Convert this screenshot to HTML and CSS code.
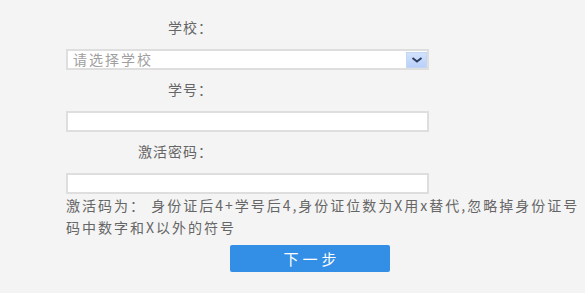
FILE: index.html
```html
<!DOCTYPE html>
<html lang="zh-CN">
<head>
<meta charset="utf-8">
<title>激活</title>
<link rel="stylesheet" href="styles.css">
</head>
<body>
<form class="form">
  <div class="group">
    <div class="label">学校：</div>
    <div class="select">
      <span class="placeholder">请选择学校</span>
      <span class="arrow"><svg width="12" height="8" viewBox="0 0 12 8"><path d="M1.5 2 L6 5.5 L10.5 2" fill="none" stroke="#2f3e5c" stroke-width="2"/></svg></span>
    </div>
  </div>
  <div class="group">
    <div class="label">学号：</div>
    <input class="input" type="text">
  </div>
  <div class="group">
    <div class="label">激活密码：</div>
    <input class="input" type="text">
  </div>
  <p class="hint">激活码为：&nbsp;身份证后4+学号后4,身份证位数为X用x替代,忽略掉身份证号码中数字和X以外的符号</p>
  <div class="actions"><button class="btn" type="button">下一步</button></div>
</form>
</body>
</html>
```

FILE: styles.css
```css
html, body {
  margin: 0;
  padding: 0;
  background: #f4f4f4;
  width: 585px;
  height: 293px;
  overflow: hidden;
}
body {
  font-family: "Noto Sans CJK SC", "Noto Sans", sans-serif;
  color: #666;
}
.form {
  padding: 17px 0 0 66px;
  display: flex;
  flex-direction: column;
}
.group {
  display: flex;
  flex-direction: column;
}
.group + .group { margin-top: 9px; }
.label {
  width: 147px;
  height: 20px;
  line-height: 20px;
  text-align: right;
  font-size: 14px;
  letter-spacing: 1px;
  color: #666;
  margin-bottom: 12px;
}
.select, .input {
  box-sizing: border-box;
  width: 363px;
  height: 21px;
  border: 2px solid #dedede;
  background: #fff;
  margin: 0;
  padding: 0;
}
.select {
  display: flex;
  align-items: center;
  justify-content: space-between;
  padding-left: 5px;
  padding-right: 0;
}
.placeholder {
  font-size: 14px;
  letter-spacing: 2px;
  color: #a0a0a0;
  line-height: 17px;
}
.arrow {
  width: 21px;
  height: 16px;
  background: linear-gradient(#d2e2fd, #b9d0fa);
  border: 1px solid #c4d6f5;
  box-sizing: border-box;
  display: flex;
  align-items: center;
  justify-content: center;
}
.input { outline: none; }
.hint {
  margin: 0;
  width: 524px;
  font-size: 14px;
  line-height: 22px;
  letter-spacing: 2px;
  color: #666;
}
.actions {
  width: 488px;
  display: flex;
  justify-content: center;
  margin-top: 7px;
}
.btn {
  width: 160px;
  height: 27px;
  border: none;
  border-radius: 2px;
  background: #338ee6;
  color: #fff;
  font-family: "Noto Sans CJK SC", sans-serif;
  font-size: 15px;
  letter-spacing: 4px;
  padding: 0 0 0 4px;
}
```
